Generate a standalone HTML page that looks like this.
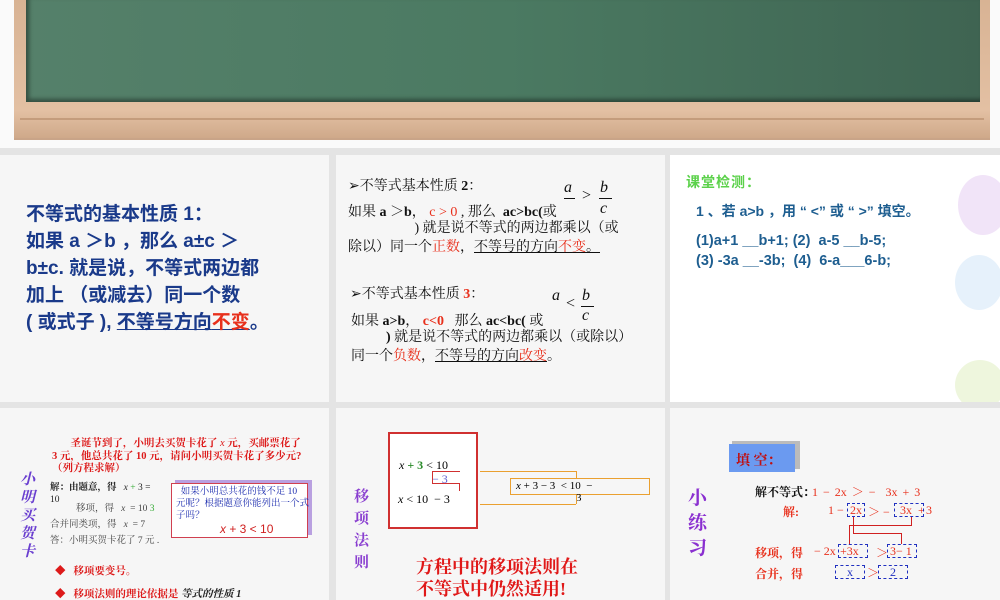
<!DOCTYPE html>
<html><head><meta charset="utf-8"><style>
*{margin:0;padding:0;box-sizing:border-box}
body{width:1000px;height:600px;background:#e4e4e4;position:relative;overflow:hidden;font-family:"Liberation Serif","Noto Serif CJK SC",serif}
.s{position:absolute;background:#f6f6f6;overflow:hidden}
.a{position:absolute;white-space:nowrap}
.r{color:#e8301c}
.u{text-decoration:underline}
.sans{font-family:"Liberation Sans","Noto Sans CJK SC",sans-serif}
.bx{position:absolute;border:1px dashed #2030c0;height:14px}
.ln{position:absolute;background:#d02020}
</style></head><body>
<div class="s" style="left:0;top:0;width:1000px;height:148px;background:#fafafa">
 <div style="position:absolute;left:14px;top:0;width:976px;height:140px;background:linear-gradient(#d8b394,#e3c0a3 80%,#cfa98a);border-bottom:2px solid #c9a488"></div>
 <div style="position:absolute;left:26px;top:0;width:954px;height:102px;background:linear-gradient(90deg,#55806a,#4b7a62 50%,#3f6452);box-shadow:inset 3px -3px 4px rgba(0,0,0,.4)"></div>
 <div style="position:absolute;left:20px;top:118px;width:964px;height:2px;background:#c49c7c"></div>
</div>
<div class="s" style="left:0;top:155px;width:329px;height:247px">
 <div class="a" style="left:26px;top:46px;font-size:19px;line-height:27px;color:#1a3a8a;font-weight:bold;font-family:'Liberation Sans','Noto Sans CJK SC',sans-serif;white-space:normal;width:300px">不等式的基本性质 1：<br>如果 a ＞b ，那么 a±c ＞<br>b±c. 就是说，不等式两边都<br>加上 （或减去）同一个数<br>( 或式子 ), <span class="u">不等号方向<span class="r">不变</span></span>。</div>
</div>
<div class="s" style="left:336px;top:155px;width:329px;height:247px;font-size:14px;color:#111">
 <div class="a" style="left:12px;top:20px">➢不等式基本性质 <b>2</b>：</div>
 <div class="a" style="left:228px;top:24px;font-style:italic;font-size:16px">a</div>
 <div class="a" style="left:264px;top:24px;font-style:italic;font-size:16px">b</div>
 <div class="a" style="left:228px;top:43px;width:11px;border-top:1px solid #111"></div>
 <div class="a" style="left:263px;top:43px;width:13px;border-top:1px solid #111"></div>
 <div class="a" style="left:246px;top:32px;font-size:16px">&gt;</div>
 <div class="a" style="left:264px;top:45px;font-style:italic;font-size:16px">c</div>
 <div class="a" style="left:12px;top:46px">如果 <b>a</b> ＞<b>b</b>， <span class="r">c &gt; 0</span> , 那么 &nbsp;<b>ac&gt;bc(</b>或</div>
 <div class="a" style="left:12px;top:64px;line-height:19px">&nbsp;&nbsp;&nbsp;&nbsp;&nbsp;&nbsp;&nbsp;&nbsp;&nbsp;&nbsp;&nbsp;&nbsp;&nbsp;&nbsp;&nbsp;&nbsp;&nbsp;&nbsp;&nbsp;) 就是说不等式的两边都乘以（或<br>除以）同一个<span class="r">正数</span>，<span class="u">不等号的方向<span class="r">不变</span>。</span></div>
 <div class="a" style="left:14px;top:128px">➢不等式基本性质 <span class="r"><b>3</b></span>：</div>
 <div class="a" style="left:216px;top:132px;font-style:italic;font-size:16px">a</div>
 <div class="a" style="left:246px;top:132px;font-style:italic;font-size:16px">b</div>
 <div class="a" style="left:230px;top:140px;font-size:16px">&lt;</div>
 <div class="a" style="left:245px;top:151px;width:13px;border-top:1px solid #111"></div>
 <div class="a" style="left:246px;top:152px;font-style:italic;font-size:16px">c</div>
 <div class="a" style="left:15px;top:155px">如果 <b>a&gt;b</b>， <span class="r"><b>c&lt;0</b></span> &nbsp;&nbsp;那么 <b>ac&lt;bc(</b> 或</div>
 <div class="a" style="left:15px;top:173px;line-height:19px">&nbsp;&nbsp;&nbsp;&nbsp;&nbsp;&nbsp;&nbsp;&nbsp;&nbsp;&nbsp;<b>)</b> 就是说不等式的两边都乘以（或除以）<br>同一个<span class="r">负数</span>，<span class="u">不等号的方向<span class="r">改变</span></span>。</div>
</div>
<div class="s sans" style="left:670px;top:155px;width:330px;height:247px;background:#fff">
 <div style="position:absolute;left:288px;top:20px;width:50px;height:60px;border-radius:50%;background:#f1e4f8"></div>
 <div style="position:absolute;left:285px;top:100px;width:48px;height:55px;border-radius:50%;background:#e6f1fb"></div>
 <div style="position:absolute;left:285px;top:205px;width:50px;height:50px;border-radius:50%;background:#eef6dd"></div>
 <div class="a" style="left:16px;top:17px;font-size:14px;font-weight:bold;color:#5bd14a;letter-spacing:1px">课堂检测：</div>
 <div class="a" style="left:26px;top:46px;font-size:14px;font-weight:bold;color:#1e5e90">1 、若 a&gt;b ，用 “ &lt;” 或 “ &gt;” 填空。</div>
 <div class="a" style="left:26px;top:76px;font-size:14.5px;font-weight:bold;color:#1e5e90;line-height:20px">(1)a+1 __b+1; (2) &nbsp;a-5 __b-5;<br>(3) -3a __-3b; &nbsp;(4) &nbsp;6-a___6-b;</div>
</div>
<div class="s" style="left:0;top:408px;width:329px;height:192px;font-size:9.5px">
 <div class="a" style="left:20px;top:62px;width:22px;font-size:15px;line-height:18px;color:#6a3fd0;font-style:italic;font-weight:bold;white-space:normal;font-family:'Noto Serif CJK SC',serif">小明买贺卡</div>
 <div class="a r" style="left:52px;top:30px;font-size:10.5px;font-weight:bold;line-height:12.5px;color:#dd1a1a">&nbsp;&nbsp;&nbsp;&nbsp;&nbsp;&nbsp;&nbsp;圣诞节到了，小明去买贺卡花了 <i style="font-weight:normal">x</i> 元，买邮票花了<br>3 元，他总共花了 10 元，请问小明买贺卡花了多少元?<br>（列方程求解）</div>
 <div class="a" style="left:50px;top:74px;line-height:12px;color:#222"><b>解：由题意，得</b> &nbsp;&nbsp;<i>x</i> <span style="color:#3a3">+</span> 3 =<br>10</div>
 <div class="a" style="left:76px;top:92px;color:#444">移项，得 &nbsp;&nbsp;<i>x</i> &nbsp;= 10 <span style="color:#3a3">3</span></div>
 <div class="a" style="left:50px;top:108px;color:#444">合并同类项，得 &nbsp;&nbsp;<i>x</i> &nbsp;= 7</div>
 <div class="a" style="left:50px;top:124px;color:#444">答：小明买贺卡花了 7 元 .</div>
 <div style="position:absolute;left:171px;top:75px;width:137px;height:55px;background:#fff;border:1px solid #d04050;box-shadow:4px -3px 0 #b9a0e0"></div>
 <div class="a" style="left:176px;top:78px;color:#2030b0;line-height:12px">&nbsp;&nbsp;如果小明总共花的钱不足 10<br>元呢？根据题意你能列出一个式<br>子吗？</div>
 <div class="a" style="left:220px;top:114px;font-size:12px;color:#d02020;font-family:'Liberation Sans',sans-serif"><i>x</i> + 3 &lt; 10</div>
 <div class="a" style="left:55px;top:155px;font-size:10.5px;font-weight:bold;color:#dd1a1a">◆ &nbsp;&nbsp;移项要变号。</div>
 <div class="a" style="left:55px;top:178px;font-size:10.5px;font-weight:bold;color:#dd1a1a">◆ &nbsp;&nbsp;移项法则的理论依据是 <i style="color:#222">等式的性质 1</i></div>
</div>
<div class="s" style="left:336px;top:408px;width:329px;height:192px">
 <div class="a" style="left:18px;top:78px;width:18px;font-size:15px;line-height:22px;color:#8a3fd0;font-weight:bold;white-space:normal">移项法则</div>
 <div style="position:absolute;left:52px;top:24px;width:90px;height:97px;background:#fff;border:2px solid #d03030"></div>
 <div class="a" style="left:63px;top:50px;font-size:12px"><i>x</i> <b style="color:#2a8a2a">+ 3</b> &lt; 10</div>
 <div class="a" style="left:96px;top:64px;font-size:12px;color:#6060d0">− 3</div>
 <div class="a" style="left:62px;top:84px;font-size:12px"><i>x</i> &lt; 10 &nbsp;− 3</div>
 <div style="position:absolute;left:96px;top:63px;width:28px;height:1px;background:#d03030"></div>
 <div style="position:absolute;left:96px;top:63px;width:1px;height:12px;background:#d03030"></div>
 <div style="position:absolute;left:96px;top:75px;width:28px;height:1px;background:#d03030"></div>
 <div style="position:absolute;left:123px;top:75px;width:1px;height:8px;background:#d03030"></div>
 <div style="position:absolute;left:144px;top:63px;width:96px;height:1px;background:#eaa030"></div>
 <div style="position:absolute;left:240px;top:63px;width:1px;height:8px;background:#eaa030"></div>
 <div style="position:absolute;left:174px;top:70px;width:140px;height:17px;border:1px solid #eaa030"></div>
 <div class="a" style="left:180px;top:72px;font-size:11px"><i>x</i> + 3 − 3 &nbsp;&lt; 10 &nbsp;−</div>
 <div class="a" style="left:240px;top:84px;font-size:11px">3</div>
 <div style="position:absolute;left:144px;top:96px;width:96px;height:1px;background:#eaa030"></div>
 <div style="position:absolute;left:240px;top:87px;width:1px;height:9px;background:#eaa030"></div>
 <div class="a" style="left:80px;top:148px;font-size:18px;line-height:22px;font-weight:bold;color:#e01818">方程中的移项法则在<br>不等式中仍然适用!</div>
</div>
<div class="s" style="left:670px;top:408px;width:330px;height:192px;font-size:12px">
 <div class="a" style="left:18px;top:78px;width:22px;font-size:19px;line-height:25px;color:#8a2fd0;font-weight:bold;white-space:normal">小练习</div>
 <div style="position:absolute;left:62px;top:33px;width:68px;height:28px;background:#bbb"></div>
 <div style="position:absolute;left:59px;top:36px;width:66px;height:28px;background:#6b9af0"></div>
 <div class="a" style="left:66px;top:42px;font-size:14px;font-weight:bold;color:#c01010">填 空：</div>
 <div class="a" style="left:85px;top:75px;font-weight:bold;color:#111">解不等式：</div>
 <div class="a r" style="left:142px;top:75px;word-spacing:2px">1 − 2x ＞ − &nbsp;3x + 3</div>
 <div class="a r" style="left:113px;top:95px;font-weight:bold">解:</div>
 <div class="a r" style="left:158px;top:95px">1 −</div>
 <div class="a r" style="left:180px;top:95px">2x</div>
 <div class="a r" style="left:198px;top:95px">＞ −</div>
 <div class="a r" style="left:230px;top:95px">3x &nbsp;+</div>
 <div class="a r" style="left:256px;top:95px">3</div>
 <div class="bx" style="left:177px;top:95px;width:18px"></div>
 <div class="bx" style="left:224px;top:95px;width:30px"></div>
 <div class="ln" style="left:183px;top:109px;width:1px;height:16px"></div>
 <div class="ln" style="left:183px;top:125px;width:48px;height:1px"></div>
 <div class="ln" style="left:231px;top:125px;width:1px;height:11px"></div>
 <div class="ln" style="left:241px;top:109px;width:1px;height:8px"></div>
 <div class="ln" style="left:179px;top:117px;width:63px;height:1px"></div>
 <div class="ln" style="left:179px;top:117px;width:1px;height:19px"></div>
 <div class="a r" style="left:85px;top:136px;font-weight:bold">移项，得</div>
 <div class="a r" style="left:144px;top:136px">− 2x</div>
 <div class="a r" style="left:170px;top:136px">+3x</div>
 <div class="a r" style="left:206px;top:136px">＞</div>
 <div class="a r" style="left:220px;top:136px">3− 1</div>
 <div class="bx" style="left:168px;top:136px;width:30px"></div>
 <div class="bx" style="left:217px;top:136px;width:30px"></div>
 <div class="a r" style="left:85px;top:157px;font-weight:bold">合并，得</div>
 <div class="bx" style="left:165px;top:157px;width:30px;color:#2030c0;text-align:center;line-height:13px">x</div>
 <div class="a r" style="left:197px;top:156px">＞</div>
 <div class="bx" style="left:208px;top:157px;width:30px;color:#2030c0;text-align:center;line-height:13px">2</div>
</div>
</body></html>
